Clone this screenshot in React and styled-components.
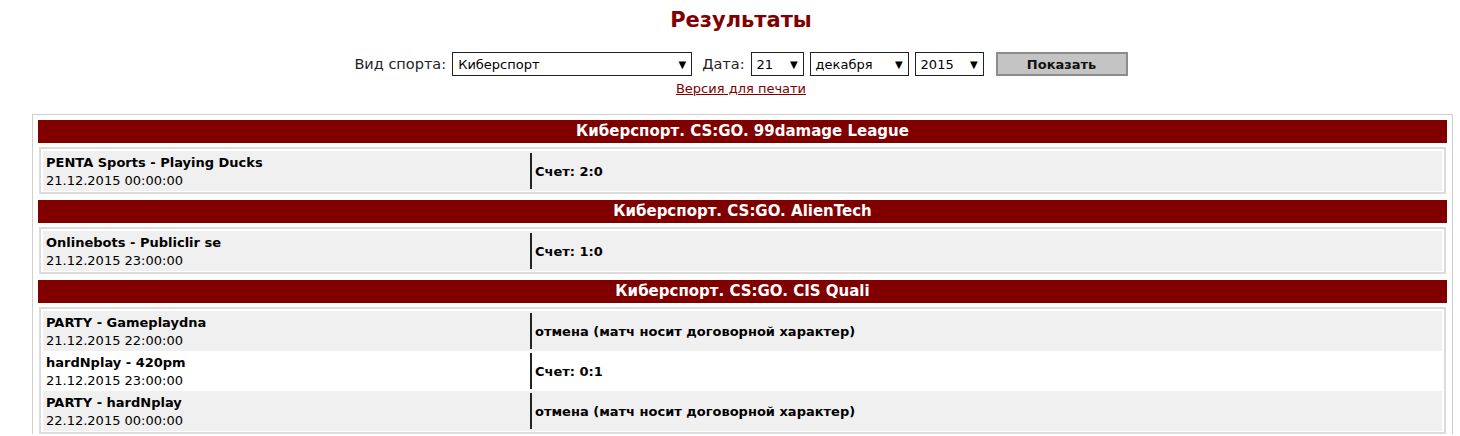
import React from "react";
import styled, { createGlobalStyle } from "styled-components";

const GlobalStyle = createGlobalStyle`
  body {
    margin: 0;
    background: #fff;
    font-family: "DejaVu Sans", Verdana, sans-serif;
    color: #000;
  }
`;

const groups = [
  {
    title: "Киберспорт. CS:GO. 99damage League",
    matches: [
      { teams: "PENTA Sports - Playing Ducks", date: "21.12.2015 00:00:00", result: "Счет: 2:0" },
    ],
  },
  {
    title: "Киберспорт. CS:GO. AlienTech",
    matches: [
      { teams: "Onlinebots - Publiclir se", date: "21.12.2015 23:00:00", result: "Счет: 1:0" },
    ],
  },
  {
    title: "Киберспорт. CS:GO. CIS Quali",
    matches: [
      { teams: "PARTY - Gameplaydna", date: "21.12.2015 22:00:00", result: "отмена (матч носит договорной характер)" },
      { teams: "hardNplay - 420pm", date: "21.12.2015 23:00:00", result: "Счет: 0:1" },
      { teams: "PARTY - hardNplay", date: "22.12.2015 00:00:00", result: "отмена (матч носит договорной характер)" },
    ],
  },
];

function App() {
  return (
    <Page>
      <GlobalStyle />
      <Title>Результаты</Title>
      <Filter>
        <Label>Вид спорта:</Label>
        <Select $w={240}>
          <span>Киберспорт</span>
          <Arrow>▼</Arrow>
        </Select>
        <Label $ml={4}>Дата:</Label>
        <Select $w={53}>
          <span>21</span>
          <Arrow>▼</Arrow>
        </Select>
        <Select $w={99}>
          <span>декабря</span>
          <Arrow>▼</Arrow>
        </Select>
        <Select $w={69}>
          <span>2015</span>
          <Arrow>▼</Arrow>
        </Select>
        <ShowButton>Показать</ShowButton>
      </Filter>
      <PrintLink href="#">Версия для печати</PrintLink>
      <Results>
        {groups.map((g, i) => (
          <Group key={i}>
            <GroupHeader>{g.title}</GroupHeader>
            <MatchBox>
              {g.matches.map((m, j) => (
                <MatchRow key={j} $odd={j % 2 === 1}>
                  <Teams>
                    <b>{m.teams}</b>
                    <span>{m.date}</span>
                  </Teams>
                  <Result>{m.result}</Result>
                </MatchRow>
              ))}
            </MatchBox>
          </Group>
        ))}
      </Results>
    </Page>
  );
}

export default App;

const Page = styled.div`
  box-sizing: border-box;
  width: 1460px;
  padding: 6px 0 0 22px;
`;

const Title = styled.h1`
  margin: 0;
  text-align: center;
  color: #800000;
  font-size: 21px;
  line-height: 28px;
  font-weight: bold;
`;

const Filter = styled.div`
  display: flex;
  justify-content: center;
  align-items: center;
  gap: 6px;
  margin-top: 18px;
  height: 24px;
`;

const Label = styled.span`
  font-size: 14.5px;
  color: #222;
  margin-left: ${(p) => p.$ml || 0}px;
`;

const Select = styled.div`
  box-sizing: border-box;
  width: ${(p) => p.$w}px;
  height: 24px;
  border: 1px solid #222;
  display: flex;
  align-items: center;
  justify-content: space-between;
  padding: 0 5px 0 5px;
  font-size: 13px;
  background: #fff;
`;

const Arrow = styled.span`
  font-size: 10px;
`;

const ShowButton = styled.button`
  box-sizing: border-box;
  margin-left: 6px;
  width: 132px;
  height: 24px;
  background: #c4c4c4;
  border: 2px solid #8c8c8c;
  font-family: "DejaVu Sans", Verdana, sans-serif;
  font-weight: bold;
  font-size: 13px;
  color: #111;
`;

const PrintLink = styled.a`
  display: block;
  width: max-content;
  margin: 5px auto 0;
  font-size: 13px;
  color: #800000;
  text-decoration: underline;
`;

const Results = styled.div`
  box-sizing: border-box;
  width: 1421px;
  margin: 18px 0 0 10px;
  border: 1px solid #cfcfcf;
  border-bottom: none;
  padding: 5px 5px 0;
  display: flex;
  flex-direction: column;
  gap: 6px;
`;

const Group = styled.div`
  display: flex;
  flex-direction: column;
  gap: 4px;
`;

const GroupHeader = styled.div`
  background: #800000;
  color: #fff;
  text-align: center;
  font-weight: bold;
  font-size: 15px;
  height: 23px;
  line-height: 23px;
`;

const MatchBox = styled.div`
  margin: 0 1px;
  border: 2px solid #dcdcdc;
  padding: 2px 2px 1px;
`;

const MatchRow = styled.div`
  display: grid;
  grid-template-columns: 487px 1fr;
  align-items: center;
  height: 40px;
  background: ${(p) => (p.$odd ? "#fff" : "#f0f0f0")};
`;

const Teams = styled.div`
  display: flex;
  flex-direction: column;
  padding: 2px 0 0 3px;
  font-size: 13px;
  line-height: 18px;
`;

const Result = styled.div`
  align-self: stretch;
  margin: 2px 0;
  border-left: 2px solid #222;
  display: flex;
  align-items: center;
  padding-left: 3px;
  font-weight: bold;
  font-size: 13px;
`;
